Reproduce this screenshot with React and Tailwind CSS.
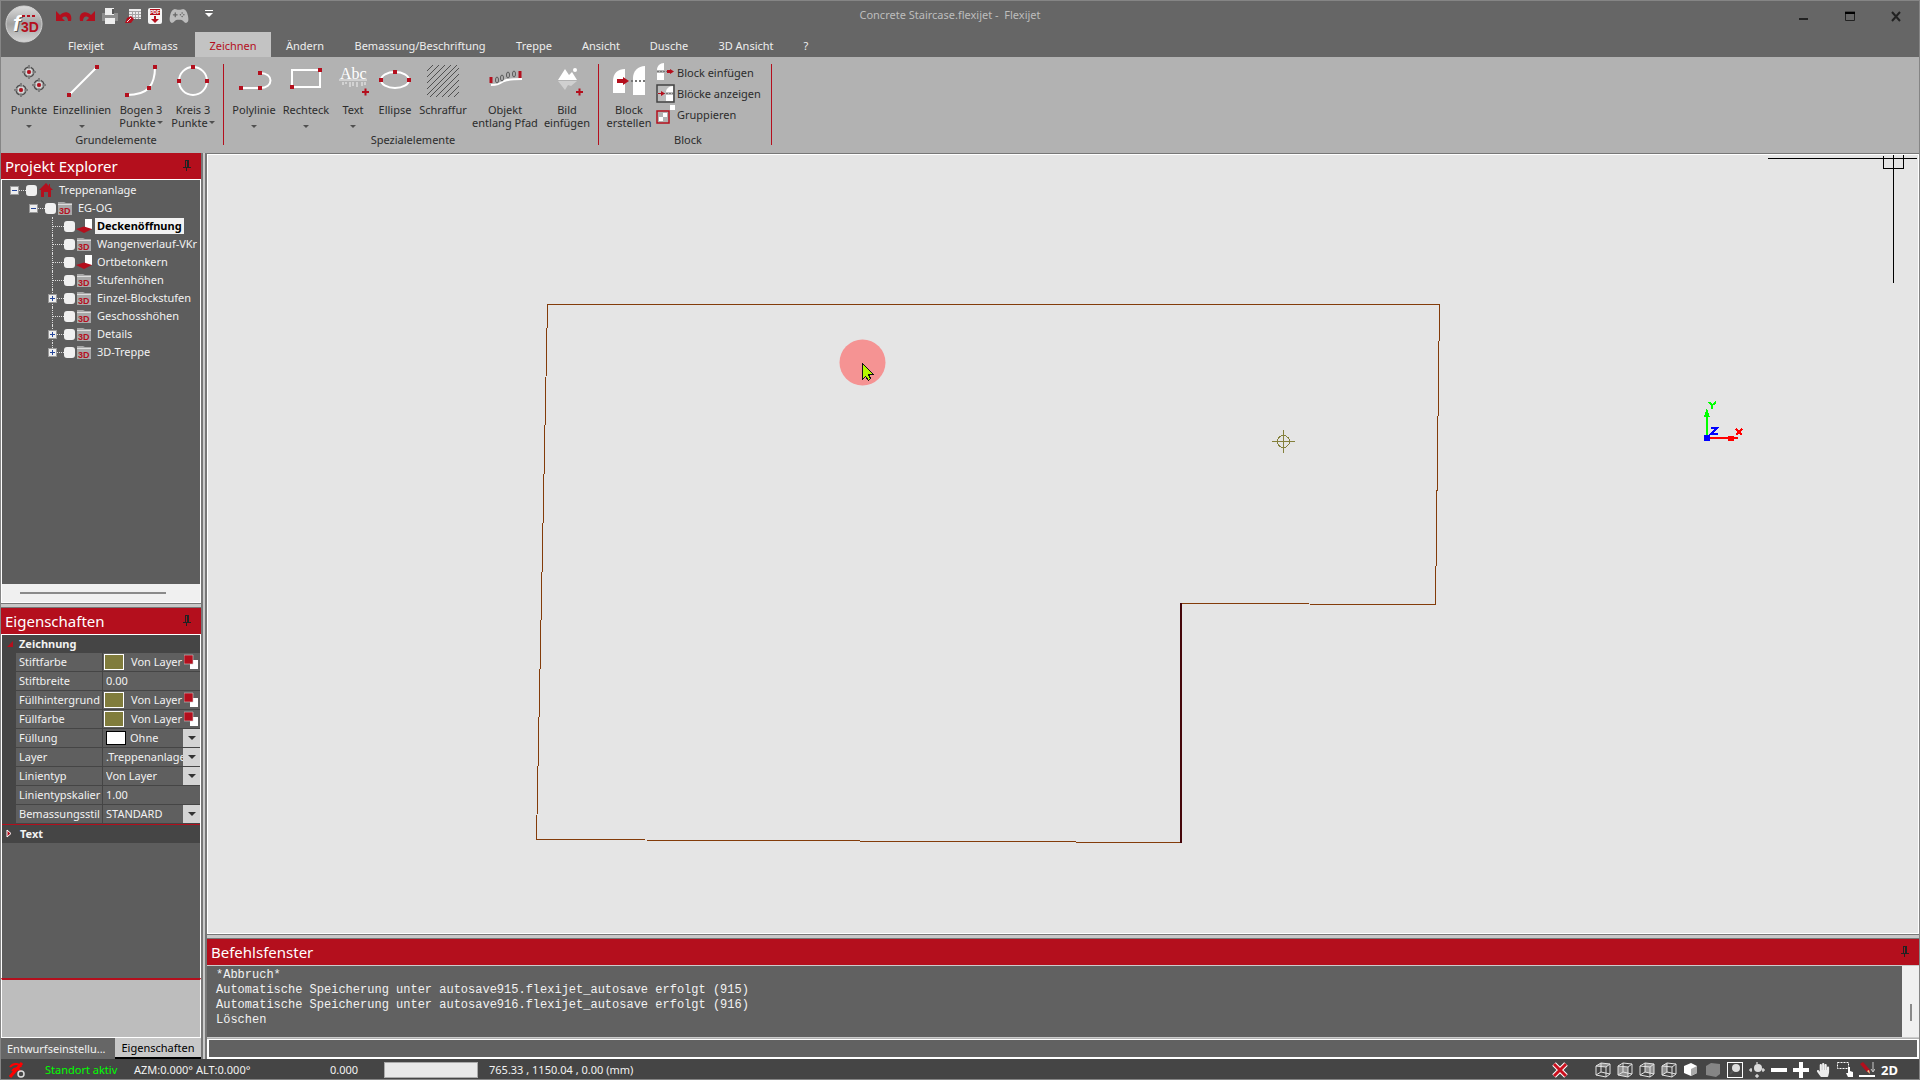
import React from "react";
import { FaHandPaper } from "react-icons/fa";
import { IoGameController } from "react-icons/io5";

const RED = "#b40f1d";

const tabs = [
  { label: "Flexijet", width: "w-[60px]" },
  { label: "Aufmass", width: "w-[79px]" },
  { label: "Zeichnen", width: "w-[76px]", active: true },
  { label: "Ändern", width: "w-[68px]" },
  { label: "Bemassung/Beschriftung", width: "w-[162px]" },
  { label: "Treppe", width: "w-[66px]" },
  { label: "Ansicht", width: "w-[68px]" },
  { label: "Dusche", width: "w-[68px]" },
  { label: "3D Ansicht", width: "w-[86px]" },
  { label: "?", width: "w-[34px]" },
];

const Dots = ({ points }) =>
  points.map(([x, y]) => (
    <rect key={`${x}-${y}`} x={x - 2} y={y - 2} width="4" height="4" fill={RED} stroke="none" />
  ));

const Plus = ({ x, y }) => (
  <path d={`M${x - 3} ${y}h7M${x + 0.5} ${y - 3.5}v7`} stroke={RED} strokeWidth="2" />
);

const Icon = ({ children, stroke = "#fff" }) => (
  <svg width="40" height="36" viewBox="0 0 40 36" fill="none" stroke={stroke} strokeWidth="2" aria-hidden="true">
    {children}
  </svg>
);

const Target = ({ x, y }) => (
  <g stroke="#4a4a4a" strokeWidth="1">
    <circle cx={x} cy={y} r="5" strokeWidth="1.4" strokeDasharray="5 2.8" strokeDashoffset="-1.4" />
    <path d={`M${x - 7} ${y}h4M${x + 3} ${y}h4M${x} ${y - 7}v4M${x} ${y + 3}v4`} />
    <circle cx={x} cy={y} r="3" stroke="#ddd" />
    <circle cx={x} cy={y} r="2" fill={RED} stroke="none" />
  </g>
);

const icons = {
  punkte: (
    <Icon>
      <Target x={20} y={9} />
      <Target x={12} y={27} />
      <Target x={30} y={22} />
    </Icon>
  ),
  linie: (
    <Icon>
      <path d="M7 32L35 4" />
      <Dots points={[[7, 32], [35, 4]]} />
    </Icon>
  ),
  bogen: (
    <Icon>
      <path d="M6 32C14 32 23 30 28 25C33 19 34 12 34 4" />
      <Dots points={[[6, 32], [28, 25], [34, 4]]} />
    </Icon>
  ),
  kreis: (
    <Icon>
      <circle cx="20" cy="18" r="14" />
      <Dots points={[[20, 4], [6, 18], [34, 18]]} />
    </Icon>
  ),
  polylinie: (
    <Icon>
      <path d="M7 25H26C40 25 40 10 26 10" />
      <Dots points={[[7, 25], [26, 25], [26, 10]]} />
    </Icon>
  ),
  rechteck: (
    <Icon>
      <rect x="6" y="7" width="28" height="17" />
      <Dots points={[[34, 7], [6, 24]]} />
    </Icon>
  ),
  text: (
    <Icon>
      <text x="7" y="16" fontSize="16" fontFamily="'Liberation Serif', serif" fill="#fff" stroke="none">Abc</text>
      <path d="M6 17h28" stroke="#eee" strokeWidth="1" />
      <path d="M10 19v3M13 19v2M17 19v5M20 19v4M24 19v5M29 19v4M32 19v3" stroke="#d2d2d2" />
      <Plus x={32} y={29} />
    </Icon>
  ),
  ellipse: (
    <Icon>
      <ellipse cx="20" cy="17" rx="14" ry="8" />
      <Dots points={[[20, 9], [6, 17], [34, 17]]} />
    </Icon>
  ),
  schraffur: (
    <Icon stroke="#505050">
      <path
        d="M4 8L10 2M4 14L16 2M4 20L22 2M4 26L28 2M4 32L34 2M7 34L36 5M13 34L36 11M19 34L36 17M25 34L36 23M31 34L36 29"
        strokeWidth="1"
      />
    </Icon>
  ),
  pfad: (
    <Icon>
      <path d="M6 22C12 22 14 21 19 18C24 16 30 16 37 16" />
      <g stroke="#5a5a5a" strokeWidth="1">
        <ellipse cx="12" cy="17" rx="1.5" ry="3" />
        <ellipse cx="17" cy="15" rx="1.5" ry="3" />
        <ellipse cx="23" cy="12" rx="1.5" ry="3" />
        <ellipse cx="29" cy="11" rx="1.5" ry="3" />
      </g>
      <path d="M6 14v6M35 8v7" stroke={RED} strokeWidth="3" />
    </Icon>
  ),
  bild: (
    <Icon>
      <path d="M11 17L18 6L22 12L25 9L30 17Z" fill="#fff" stroke="none" />
      <circle cx="28" cy="7" r="2" fill="#fff" stroke="none" />
      <path d="M11 18H30L24 23L21 22L18 27Z" fill="#d0d0d0" stroke="none" />
      <Plus x={32} y={29} />
    </Icon>
  ),
  block: (
    <Icon>
      <path d="M4 30V18C4 10 9 6 16 6V30Z" fill="#fff" stroke="none" />
      <path d="M24 32V15C24 8 29 3 36 3V32Z" fill="#fff" stroke="none" />
      <path d="M22 18H36" stroke="#777" strokeDasharray="2 2" />
      <path d="M8 16h6v-2l6 4l-6 4v-2h-6z" fill={RED} stroke="none" />
    </Icon>
  ),
};

const Caret = ({ className = "" }) => (
  <svg width="6" height="4" viewBox="0 0 6 4" className={className} aria-hidden="true">
    <path d="M0 0h6L3 3z" fill="#505050" />
  </svg>
);

const ToolButton = ({ icon, lines, width, caret }) => (
  <button className={`flex shrink-0 flex-col items-center ${width}`}>
    {icons[icon]}
    <span className="mt-1 flex flex-col items-center whitespace-nowrap leading-[13px]">
      <span>{lines[0]}</span>
      {lines[1] && (
        <span className="flex items-center gap-px">
          {lines[1]}
          {caret && <Caret />}
        </span>
      )}
    </span>
    {caret && !lines[1] && <Caret className="mt-[9px] mr-px" />}
  </button>
);

const RibbonGroup = ({ title, children, className }) => (
  <section className={`mt-[7px] h-[81px] shrink-0 border-r border-[#b40f1d] ${className}`}>
    <div className="-mt-px flex h-[69px]">{children}</div>
    <h2 className="text-center leading-4">{title}</h2>
  </section>
);

const blockActions = [
  {
    label: "Block einfügen",
    icon: (
      <>
        <path d="M1 7C1 3 4 0 8 0V7ZM1 10H8V17H1Z" fill="#fff" />
        <path d="M1 8.5H12" stroke="#777" strokeDasharray="2 1" />
        <path d="M11 7h3v-1l4 2.5l-4 2.5v-1h-3z" fill={RED} />
      </>
    ),
  },
  {
    label: "Blöcke anzeigen",
    icon: (
      <>
        <rect x="1" y="1" width="17" height="17" fill="#bdbdbd" stroke="#444" strokeWidth="1.5" />
        <path d="M10 8C10 5 13 2 17 2V8ZM10 11H17V17H10Z" fill="#fff" />
        <path d="M1 9.5H17" stroke="#777" strokeDasharray="2 1" />
        <path d="M2 9h3v-2l4 2.5l-4 2.5v-2h-3z" fill={RED} />
      </>
    ),
  },
  {
    label: "Gruppieren",
    icon: (
      <>
        <rect x="14" y="0" width="5" height="5" fill="#fff" />
        <rect x="1" y="6" width="12" height="12" stroke={RED} strokeWidth="1.5" />
        <path d="M7 8h4v4h-4v4h-4v-4h4z" fill="#fff" />
      </>
    ),
  },
];

const Pin = () => (
  <svg width="8" height="12" viewBox="0 0 8 12" aria-hidden="true">
    <path d="M2 0h4v7H2zM0 7h8v1H0zM3 8h1v3H3z" fill="#222" />
    <path d="M3 1h1v6H3z" fill={RED} />
  </svg>
);

const PanelHeader = ({ title }) => (
  <header className="flex h-[26px] shrink-0 items-center justify-between bg-[#b40f1d] pr-[10px] pl-1">
    <h2 className="text-[15px] leading-5 text-white">{title}</h2>
    <button aria-label={`${title} anheften`}><Pin /></button>
  </header>
);

const tree = [
  { label: "Treppenanlage", level: 0, icon: "home", toggle: "-" },
  { label: "EG-OG", level: 1, icon: "folder", toggle: "-" },
  { label: "Deckenöffnung", level: 2, icon: "layer", selected: true },
  { label: "Wangenverlauf-VKr", level: 2, icon: "folder" },
  { label: "Ortbetonkern", level: 2, icon: "layer" },
  { label: "Stufenhöhen", level: 2, icon: "folder" },
  { label: "Einzel-Blockstufen", level: 2, icon: "folder", toggle: "+" },
  { label: "Geschosshöhen", level: 2, icon: "folder" },
  { label: "Details", level: 2, icon: "folder", toggle: "+" },
  { label: "3D-Treppe", level: 2, icon: "folder", toggle: "+", last: true },
];

const indents = ["pl-2", "pl-[27px]", "pl-[46px]"];

const TreeIcon = ({ name }) => (
  <svg width="16" height="16" viewBox="0 0 16 16" aria-hidden="true">
    {name === "home" && <path d="M8 1L1 8h2v7h3V10h4v5h3V8h2L12 5V2h-1v2z" fill={RED} />}
    {name === "folder" && (
      <>
        <path d="M1 2h6l2 1h6v12H1z" fill="#a8a8a8" />
        <path d="M1 4.5h14" stroke="#ddd" />
        <text x="2" y="14" fontSize="9" fontWeight="bold" fontFamily="'Liberation Sans', sans-serif" fill={RED}>3D</text>
      </>
    )}
    {name === "layer" && (
      <>
        <path d="M9 1h7v10H9z" fill="#fff" />
        <path d="M0 11L8 8.5L16 11L8 15z" fill={RED} />
      </>
    )}
  </svg>
);

const TreeRow = ({ item }) => (
  <li className={`relative flex h-[18px] items-center ${indents[item.level]}`}>
    {item.level === 2 && (
      <span
        className={`absolute top-0 left-[50px] border-l border-dotted border-[#ddd] ${item.last ? "h-[9px]" : "h-full"}`}
      />
    )}
    <span className="relative flex w-4 shrink-0 items-center">
      {item.toggle ? (
        <button
          aria-label={`${item.label} umschalten`}
          className="grid size-[9px] place-items-center border border-[#999] bg-[#eee]"
        >
          <svg width="5" height="5" viewBox="0 0 5 5" aria-hidden="true">
            <path d={item.toggle === "+" ? "M0 2h5v1H0zM2 0h1v5H2z" : "M0 2h5v1H0z"} fill="#26479b" />
          </svg>
        </button>
      ) : (
        <span className="w-[5px]" />
      )}
      <span className="flex-1 border-t border-dotted border-[#ddd]" />
    </span>
    <label className="flex shrink-0 items-center whitespace-nowrap">
      <input type="checkbox" className="size-[11px] appearance-none rounded-[3px] bg-[#f0f0f0]" />
      <span className="ml-px"><TreeIcon name={item.icon} /></span>
      <span className={item.selected ? "ml-[3px] bg-[#f2f2f2] px-[2px] font-bold text-black" : "ml-[5px]"}>
        {item.label}
      </span>
    </label>
  </li>
);

const properties = [
  { label: "Stiftfarbe", kind: "color", value: "Von Layer" },
  { label: "Stiftbreite", kind: "text", value: "0.00" },
  { label: "Füllhintergrund", kind: "color", value: "Von Layer" },
  { label: "Füllfarbe", kind: "color", value: "Von Layer" },
  { label: "Füllung", kind: "select", value: "Ohne", swatch: true },
  { label: "Layer", kind: "select", value: ".Treppenanlage" },
  { label: "Linientyp", kind: "select", value: "Von Layer" },
  { label: "Linientypskalier", kind: "text", value: "1.00" },
  { label: "Bemassungsstil", kind: "select", value: "STANDARD" },
];

const PropertyRow = ({ row, id }) => (
  <div className="flex h-[19px] border-b border-[#454545] bg-[#5f5f5f]">
    <label htmlFor={id} className="w-[87px] shrink-0 overflow-hidden border-r border-[#454545] pl-[3px] leading-[18px] whitespace-nowrap">
      {row.label}
    </label>
    <div className="flex min-w-0 flex-1 items-center">
      {row.kind === "color" && (
        <>
          <span className="ml-px h-4 w-5 shrink-0 border border-white bg-[#807c3c]" />
          <button id={id} className="flex flex-1 items-center justify-between pl-[7px] whitespace-nowrap">
            {row.value}
            <svg width="15" height="16" viewBox="0 0 15 16" className="mr-px shrink-0" aria-hidden="true">
              <path d="M6 6h8v9H6z" fill="#fff" />
              <path d="M0 1h9v9H0z" fill={RED} stroke="#ccc" strokeWidth="0.6" />
            </svg>
          </button>
        </>
      )}
      {row.kind === "text" && <input id={id} defaultValue={row.value} className="w-full bg-transparent pl-[3px] outline-none" />}
      {row.kind === "select" && (
        <>
          {row.swatch && <span className="ml-[3px] h-[14px] w-5 shrink-0 border border-black bg-white" />}
          <select id={id} className={`h-[18px] min-w-0 flex-1 appearance-none bg-transparent outline-none ${row.swatch ? "pl-1" : "pl-[3px]"}`}>
            <option>{row.value}</option>
          </select>
          <span className="grid h-[18px] w-[17px] shrink-0 place-items-center bg-[#d4d4d4]">
            <svg width="8" height="4" aria-hidden="true"><path d="M0 0h8L4 4z" fill="#333" /></svg>
          </span>
        </>
      )}
    </div>
  </div>
);

const TitleBar = () => (
  <header className="relative flex h-14 shrink-0 flex-col bg-[#666] text-[#eee]">
    <button aria-label="Flexijet Menü" className="absolute top-1 left-1 z-10">
      <svg width="38" height="38" viewBox="0 0 38 38" aria-hidden="true">
        <defs>
          <linearGradient id="orb" x1="0" y1="0" x2="0" y2="1">
            <stop offset="0" stopColor="#dcdcdc" />
            <stop offset="0.5" stopColor="#a2a2a2" />
            <stop offset="1" stopColor="#d4d4d4" />
          </linearGradient>
        </defs>
        <circle cx="19" cy="19" r="18" fill="url(#orb)" stroke="#d0d0d0" />
        <g fontSize="22" fontStyle="italic" fontWeight="bold" fontFamily="'Liberation Sans', sans-serif">
          <text x="9" y="27" fill="#5a5a5a">f</text>
          <text x="8" y="26" fill="#fff">f</text>
        </g>
        <text x="16" y="27" fontSize="14" fontWeight="bold" fontFamily="'Liberation Sans', sans-serif" fill={RED}>3D</text>
        <path d="M17 11h3M22 11h3M27 11h3" stroke={RED} strokeWidth="2" />
      </svg>
    </button>
    <div className="flex h-[31px] shrink-0 items-start">
      <div className="flex items-center gap-[7px] pt-[5px] pl-[55px]">
        <button aria-label="Rückgängig">
          <svg width="16" height="16" viewBox="0 0 16 16" aria-hidden="true">
            <path d="M0 3V13H9L6 10C9 7 12 9 12 13H15C17 4 9 2 4 7Z" fill={RED} />
          </svg>
        </button>
        <button aria-label="Wiederholen">
          <svg width="16" height="16" viewBox="0 0 16 16" aria-hidden="true">
            <path d="M16 3V13H7L10 10C7 7 4 9 4 13H1C-1 4 7 2 12 7Z" fill={RED} />
          </svg>
        </button>
        <button aria-label="Speichern">
          <svg width="16" height="16" viewBox="0 0 16 16" aria-hidden="true">
            <path d="M0 5h16v8H0z" fill="#8d8d8d" />
            <path d="M3 0h9v7H3zM3 10h10v6H3z" fill="#eee" />
            <path d="M10 1h2v5h-2z" fill="#555" />
          </svg>
        </button>
        <button aria-label="Tabelle">
          <svg width="16" height="16" viewBox="0 0 16 16" aria-hidden="true">
            <path d="M4 1h12v10H4z" fill="#ededed" />
            <path d="M4 3.5h12M4 6.5h12M4 9.5h12M7.5 3v8M10.5 3v8M13.5 3v8" stroke="#a5a5a5" />
            <path d="M0 15l2-5 4-2 3 3-3 4z" fill={RED} />
            <path d="M2 14l4-4" stroke="#eee" />
          </svg>
        </button>
        <button aria-label="PDF">
          <svg width="14" height="16" viewBox="0 0 14 16" aria-hidden="true">
            <rect width="14" height="16" rx="2" fill="#f5f5f5" />
            <path d="M2 1h10v6H2zM6 8h2v3h3l-4 4l-4-4h3z" fill={RED} />
            <text x="2" y="6" fontSize="5" fontWeight="bold" fontFamily="'Liberation Sans', sans-serif" fill="#fff">PDF</text>
          </svg>
        </button>
        <button aria-label="Controller"><IoGameController size={20} color="#bcbcbc" /></button>
        <button aria-label="Leiste anpassen" className="-mt-1 ml-[9px]">
          <svg width="8" height="8" viewBox="0 0 8 8" aria-hidden="true">
            <path d="M0 0h8v1H0zM0 3h8L4 7z" fill="#fff" />
          </svg>
        </button>
      </div>
      <h1 className="absolute inset-x-0 top-[6px] pr-5 text-center leading-4 text-[#bdbdbd]">
        Concrete Staircase.flexijet - &nbsp;Flexijet
      </h1>
      <div className="z-10 ml-auto flex items-center gap-9 pt-[10px] pr-[18px] text-[#222]">
        <button aria-label="Minimieren"><svg width="10" height="12" aria-hidden="true"><path d="M0 8h9" stroke="#222" strokeWidth="2" /></svg></button>
        <button aria-label="Maximieren"><svg width="10" height="12" aria-hidden="true"><path d="M.5 1v8.5h9V1M0 1h10" fill="none" stroke="#222" strokeWidth="1" /><path d="M0 1h10v2H0z" /></svg></button>
        <button aria-label="Schließen"><svg width="10" height="12" aria-hidden="true"><path d="M1 1l8 9M9 1l-8 9" stroke="#222" strokeWidth="2" /></svg></button>
      </div>
    </div>
    <nav className="flex h-[25px] pl-[55px]">
      {tabs.map((tab) => (
        <button
          key={tab.label}
          className={`shrink-0 pt-[2px] whitespace-nowrap ${tab.width} ${tab.active ? "bg-[#c3c3c3] text-[#b40f1d]" : ""}`}
        >
          {tab.label}
        </button>
      ))}
    </nav>
  </header>
);

const Ribbon = () => (
  <div className="flex h-24 shrink-0 bg-[#b2b2b2] text-[#2c2c2c]">
    <RibbonGroup title="Grundelemente" className="w-[223px] pl-2">
      <ToolButton icon="punkte" lines={["Punkte"]} width="w-10" caret />
      <ToolButton icon="linie" lines={["Einzellinien"]} width="w-[66px]" caret />
      <ToolButton icon="bogen" lines={["Bogen 3", "Punkte"]} width="w-[52px]" caret />
      <ToolButton icon="kreis" lines={["Kreis 3", "Punkte"]} width="w-[52px]" caret />
    </RibbonGroup>
    <RibbonGroup title="Spezialelemente" className="w-[375px] pl-1">
      <ToolButton icon="polylinie" lines={["Polylinie"]} width="w-[52px]" caret />
      <ToolButton icon="rechteck" lines={["Rechteck"]} width="w-[52px]" caret />
      <ToolButton icon="text" lines={["Text"]} width="w-[42px]" caret />
      <ToolButton icon="ellipse" lines={["Ellipse"]} width="w-[42px]" />
      <ToolButton icon="schraffur" lines={["Schraffur"]} width="w-[54px]" />
      <ToolButton icon="pfad" lines={["Objekt", "entlang Pfad"]} width="w-[70px]" />
      <ToolButton icon="bild" lines={["Bild", "einfügen"]} width="w-[54px]" />
    </RibbonGroup>
    <RibbonGroup title="Block" className="w-[173px] pl-[6px]">
      <ToolButton icon="block" lines={["Block", "erstellen"]} width="w-12" />
      <div className="flex flex-col gap-[2px] pl-[3px]">
        {blockActions.map((action) => (
          <button key={action.label} className="flex h-[19px] items-center gap-[2px] whitespace-nowrap">
            <svg width="19" height="19" viewBox="0 0 19 19" fill="none" aria-hidden="true">{action.icon}</svg>
            {action.label}
          </button>
        ))}
      </div>
    </RibbonGroup>
  </div>
);

const Sidebar = () => (
  <aside className="flex w-[200px] shrink-0 flex-col bg-[#b2b2b2] text-[#f2f2f2]">
    <PanelHeader title="Projekt Explorer" />
    <div className="flex flex-[424] flex-col border border-white">
      <ul className="flex-1 overflow-hidden bg-[#5d5d5d] pt-px">
        {tree.map((item) => <TreeRow key={item.label} item={item} />)}
      </ul>
      <div className="h-[18px] bg-[#f0f0f0] pt-2 pr-[34px] pl-[18px]">
        <div className="h-[2px] bg-[#8a8a8a]" />
      </div>
    </div>
    <div className="h-[5px] shrink-0 border-y border-[#777] bg-[#c9c9c9]" />
    <PanelHeader title="Eigenschaften" />
    <div className="flex flex-[345] flex-col border border-b-0 border-white bg-[#5d5d5d]">
      <section className="border-b border-[#b40f1d] bg-[#454545] pl-[14px]">
        <h3 className="-ml-[9px] flex h-[18px] items-center gap-[6px] font-bold">
          <svg width="6" height="6" aria-hidden="true"><path d="M6 0v6H0z" fill={RED} /></svg>
          Zeichnung
        </h3>
        {properties.map((row, i) => <PropertyRow key={row.label} row={row} id={`prop-${i}`} />)}
      </section>
      <h3 className="flex h-[18px] items-center gap-2 bg-[#454545] pl-1 font-bold">
        <svg width="6" height="9" aria-hidden="true"><path d="M1 1l4 3.5L1 8z" fill={RED} stroke="#fff" /></svg>
        Text
      </h3>
    </div>
    <div className="h-[60px] shrink-0 border border-t-2 border-white border-t-[#b40f1d] bg-[#bdbdbd]" />
    <div className="flex h-[21px] shrink-0 bg-[#666]">
      <button className="w-[114px] pl-[6px] text-left">Entwurfseinstellu...</button>
      <button className="flex-1 border-b-2 border-black bg-[#c8c8c8] text-black">Eigenschaften</button>
    </div>
  </aside>
);

// Plan view: slab opening outline, snap marker, crosshair, axes and pointer
const DrawingCanvas = () => (
  <div className="min-h-0 flex-1 border border-white bg-[#e5e5e5]">
    <svg className="block size-full" viewBox="0 0 1710 778" preserveAspectRatio="xMaxYMin meet" fill="none" shapeRendering="crispEdges" aria-label="Grundriss">
      <path d="M339.5 149.5H1231.5L1227.5 449.5L973.5 448.5M973.5 687.5L328.5 684.5L339.5 149.5" stroke="#833c0a" />
      <path d="M973 448V688" stroke="#45060a" strokeWidth="2" />
      <circle cx="654.5" cy="207.5" r="23" fill="#f59393" shapeRendering="auto" />
      <path d="M654.5 208.5V224.5L657.5 221.5L660.5 225.5L662.5 223.5L660.5 219.5H665.5Z" fill="#b5f800" stroke="#111" />
      <g stroke="#84803c">
        <circle cx="1075.5" cy="286.5" r="6" />
        <path d="M1064 286.5H1087M1075.5 275V298" />
      </g>
      <path d="M1560 3.5H1709M1685.5 0V128M1675.5 1V13.5H1695.5V0" stroke="#000" />
      <g>
        <path d="M1499 283V255" stroke="#0f0" strokeWidth="2" />
        <path d="M1499 253l3 9h-6z" fill="#0f0" />
        <path d="M1499 283H1530" stroke="#f00" strokeWidth="2" />
        <path d="M1520 281h6v5h-6z" fill="#f00" />
        <path d="M1496 280h6v6h-6z" fill="#00f" />
        <path d="M1501 247l3 3.5l4-3.5M1504 250v4" stroke="#0f0" strokeWidth="2" />
        <path d="M1503 273h6l-6 6h7" stroke="#00f" strokeWidth="2" />
        <path d="M1528 274l6 6M1534 274l-6 6" stroke="#f00" strokeWidth="2" />
      </g>
    </svg>
  </div>
);

const logLines = [
  "*Abbruch*",
  "Automatische Speicherung unter autosave915.flexijet_autosave erfolgt (915)",
  "Automatische Speicherung unter autosave916.flexijet_autosave erfolgt (916)",
  "Löschen",
];

const CommandWindow = () => (
  <section className="flex shrink-0 flex-col">
    <PanelHeader title="Befehlsfenster" />
    <div className="flex h-[73px] border-t border-b border-[#ccc] bg-[#616161]">
      <div className="flex-1 pt-[2px] pl-[9px] font-['Liberation_Mono',monospace] text-[12px] leading-[15px] text-[#f2f2f2]">
        {logLines.map((line) => <p key={line}>{line}</p>)}
      </div>
      <div className="w-[17px] bg-[#f0f0f0] pt-[38px] pl-2">
        <div className="h-[17px] w-[2px] bg-[#8a8a8a]" />
      </div>
    </div>
    <input aria-label="Befehl" className="mt-px h-5 w-full border-2 border-t border-white bg-[#616161] px-1 text-white outline-none" />
  </section>
);

const Cube = ({ face }) => (
  <svg width="16" height="16" viewBox="0 0 16 16" fill="none" stroke="#e2e2e2" aria-hidden="true">
    {face && <path d={face} fill="#8f8f8f" stroke="none" />}
    <path d="M1 4L6 1L15 2V12L11 15L1 13ZM1 4L11 5L15 2M11 5V15M6 1V10L1 13M6 10L15 12" />
  </svg>
);

const viewTools = [
  { label: "Ansicht oben", icon: <Cube face="M1 4L6 1L15 2L11 5Z" /> },
  { label: "Ansicht vorne", icon: <Cube face="M1 4L11 5V15L1 13Z" /> },
  { label: "Ansicht links", icon: <Cube face="M6 1L15 2V12L6 10Z" /> },
  { label: "Ansicht rechts", icon: <Cube face="M1 4L6 1V10L1 13Z" /> },
  {
    label: "Isometrie",
    icon: <><path d="M1 4L8 1L14 4V11L8 14L1 11Z" fill="#fff" /><path d="M8 7L14 4V11L8 14Z" fill="#aaa" /></>,
  },
  { label: "Schattiert", icon: <path d="M1 4L6 1L15 2V12L11 15L1 13Z" fill="#858585" /> },
  {
    label: "Zoom alles",
    icon: <><rect x=".5" y=".5" width="15" height="15" fill="none" stroke="#fff" /><circle cx="9" cy="6" r="4" fill="#ddd" /><path d="M6 9l-3 3" stroke="#555" strokeWidth="2" /></>,
  },
  {
    label: "Zoom dynamisch",
    icon: <><circle cx="9" cy="6" r="4" fill="#ddd" /><path d="M0 8h3M13 8h3M8 0v2M8 12v4M2 6v4M6 14h4M14 6v4" stroke="#fff" /></>,
  },
  { label: "Verkleinern", icon: <path d="M0 6h16v4H0z" fill="#fff" /> },
  { label: "Vergrößern", icon: <path d="M0 6h6V0h4v6h6v4h-6v6H6v-6H0z" fill="#fff" /> },
  { label: "Verschieben", hand: true },
  {
    label: "Fenster zoomen",
    icon: <><path d="M.5 .5h11v6H.5z" fill="none" stroke="#fff" strokeDasharray="2 1" /><path d="M11 5h2v4l3 1v5h-5l-2-4h2z" fill="#fff" /></>,
  },
  {
    label: "Zeichnen",
    icon: <><path d="M1 2l3-2l7 8v3l-3-1z" fill={RED} /><path d="M8 9l3 3l-1-4z" fill="#edcf9b" /><path d="M14 0v9M12 7l2 3l2-3" stroke="#ccc" fill="none" /><path d="M0 13h16v2H0z" fill="#fff" /></>,
  },
];

const StatusBar = () => (
  <footer className="flex h-5 shrink-0 items-center bg-[#454545] pt-px text-[#f2f2f2]">
    <svg width="16" height="16" viewBox="0 0 16 16" className="ml-2" fill="none" aria-hidden="true">
      <path d="M1 15L13 1" stroke="#f00" strokeWidth="3" />
      <path d="M1 5C5 0 11 2 12 5M3 9C6 5 10 6 11 9" stroke="#f00" strokeWidth="2" />
      <circle cx="12" cy="12" r="3" stroke="#ddd" strokeWidth="1.5" />
    </svg>
    <span className="ml-5 w-[89px] text-[#0f0]">Standort aktiv</span>
    <span className="w-[196px]">AZM:0.000° ALT:0.000°</span>
    <span className="w-[54px]">0.000</span>
    <input aria-label="Eingabe" className="h-4 w-[94px] border border-[#aaa] bg-[#e8e8e8] text-black outline-none" />
    <span className="ml-[11px]">765.33 , 1150.04 , 0.00 (mm)</span>
    <div className="ml-auto flex items-center gap-[6px] pr-[21px]">
      <button aria-label="Abbrechen" className="mr-[21px]">
        <svg width="16" height="16" viewBox="0 0 16 16" aria-hidden="true">
          <path d="M2 2l12 12M14 2L2 14" stroke="#fff" strokeWidth="5" />
          <path d="M2 2l12 12M14 2L2 14" stroke="#c8101e" strokeWidth="3" />
        </svg>
      </button>
      {viewTools.map((tool) => (
        <button key={tool.label} aria-label={tool.label} className="w-4">
          {tool.hand ? (
            <FaHandPaper size={14} className="mx-auto" color="#eee" />
          ) : (
            <svg width="16" height="16" viewBox="0 0 16 16" aria-hidden="true">{tool.icon}</svg>
          )}
        </button>
      ))}
      <button className="text-[13px] font-bold text-white">2D</button>
    </div>
  </footer>
);

const App = () => (
  <div className="flex h-screen min-h-[720px] flex-col overflow-hidden border border-[#858585] bg-[#b2b2b2] font-['Noto_Sans',sans-serif] text-[11px] leading-4">
    <TitleBar />
    <Ribbon />
    <div className="flex min-h-0 flex-1">
      <Sidebar />
      <div className="w-[6px] shrink-0 border-x-2 border-[#777] bg-[#c9c9c9]" />
      <main className="flex min-w-0 flex-1 flex-col border-t border-[#777]">
        <DrawingCanvas />
        <div className="h-[5px] shrink-0 border-y border-[#777] bg-[#c9c9c9]" />
        <CommandWindow />
      </main>
    </div>
    <StatusBar />
  </div>
);

export default App;
